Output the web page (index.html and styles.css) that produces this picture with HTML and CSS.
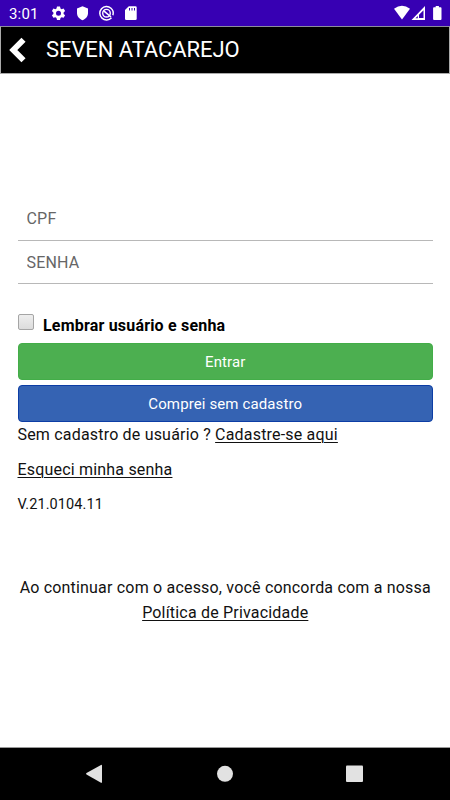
FILE: index.html
```html
<!DOCTYPE html>
<html lang="pt-BR">
<head>
<meta charset="utf-8">
<title>Seven Atacarejo</title>
<link rel="stylesheet" href="styles.css">
</head>
<body>
<div class="status">
  <span class="time">3:01</span>
  <svg class="left-icons" width="92" height="26" viewBox="0 0 92 26">
    <path fill="#fff" fill-rule="evenodd" d="M7 6.500h3l.5 2 1.100.7 2-.6 1.500 2.500-1.500 1.400v1.400l1.500 1.400-1.500 2.500-2-.6-1.100.7-.5 2H7l-.5-2-1.100-.7-2 .6-1.500-2.500 1.500-1.400v-1.400L1.900 11.100l1.500-2.500 2 .6 1.100-.7zM8.500 10.700a2.500 2.500 0 1 0 0 5 2.500 2.500 0 0 0 0-5z"/>
    <path fill="#fff" d="M32.500 6.200l5.500 2.200v4.600c0 3.400-2.300 6-5.500 7.200-3.200-1.200-5.500-3.800-5.500-7.200V8.400z"/>
    <path fill="#fff" d="M78.800 6.300h6.600q1.300 0 1.300 1.300v11.200q0 1.200-1.300 1.200h-9.100q-1.300 0-1.300-1.200v-8.700z"/>
    <g fill="none" stroke="#fff">
      <circle cx="56.500" cy="13.200" r="6.700" stroke-width="1.500" stroke-dasharray="39 3.100" transform="rotate(42 56.500 13.200)"/>
      <circle cx="56.500" cy="13.200" r="3.800" stroke-width="1.400"/>
      <path d="M53.500 10.600l7.500 6.400" stroke-width="1.600"/>
    </g>
    <path d="M79.500 8v2.500M82 8v2.500M84.500 8v2.500" stroke="#3700b3"/>
  </svg>
  <svg class="right-icons" width="50" height="26" viewBox="0 0 50 26">
    <path fill="#fff" d="M2 8.700q8-5.800 16 0l-8 10.800z"/>
    <path fill="#fff" fill-rule="evenodd" d="M33 6v13.900H19.500zM31.500 10.200L27 14.700v3.400h4.500zM25.800 15.900l-2.300 2.300h2.300z"/>
    <path fill="#fff" d="M43.700 6h3.200v1.300h1.700q.9 0 .9.900v10.900q0 .9-.9.900h-6.600q-.9 0-.9-.9V8.200q0-.9.900-.9h1.700z"/>
  </svg>
</div>
<header class="header">
  <svg class="back" width="18" height="26" viewBox="0 0 18 26"><path d="M14.500 2.700L4.300 13l10.200 10.300" fill="none" stroke="#fff" stroke-width="5.800"/></svg>
  <h1 class="title">SEVEN ATACAREJO</h1>
</header>
<main class="content">
  <form class="form">
    <input class="field" type="text" placeholder="CPF">
    <input class="field" type="password" placeholder="SENHA">
    <label class="remember"><input class="check" type="checkbox"><span>Lembrar usuário e senha</span></label>
    <button class="btn enter" type="button"><span>Entrar</span></button>
    <button class="btn guest" type="button"><span>Comprei sem cadastro</span></button>
  </form>
  <p class="line signup">Sem cadastro de usuário ? <a>Cadastre-se aqui</a></p>
  <p class="line forgot"><a>Esqueci minha senha</a></p>
  <p class="line version">V.21.0104.11</p>
  <p class="privacy">Ao continuar com o acesso, você concorda com a nossa<br><a>Política de Privacidade</a></p>
</main>
<nav class="nav">
  <svg width="450" height="52" viewBox="0 0 450 52" fill="#e2e2e2">
    <path d="M86.500 25L101 17q1-.5 1 .6v16.600q0 1-1 .5L86.500 26.500q-1-.7 0-1.500z"/>
    <circle cx="225" cy="25.800" r="8"/>
    <rect x="346" y="17.400" width="17" height="16.600" rx="1"/>
  </svg>
</nav>
</body>
</html>
```
FILE: styles.css
```css
* { box-sizing: border-box; }
body {
  margin: 0;
  height: 800px;
  display: flex;
  flex-direction: column;
  overflow: hidden;
  background: #fff;
  color: #111;
  font-family: Roboto, sans-serif;
  font-size: 16px;
  letter-spacing: .19px;
}
p, h1 { margin: 0; }
a { text-decoration: underline; text-underline-offset: 2px; text-decoration-thickness: 1px; }
.status {
  height: 26px;
  flex: none;
  display: flex;
  background: #3700b3;
  color: #fff;
}
.time { width: 50px; padding-left: 9px; font-size: 15px; line-height: 28px; }
.right-icons { margin-left: auto; margin-right: 8px; }
.header {
  height: 48px;
  flex: none;
  display: flex;
  align-items: center;
  background: #000;
  border: 1px solid #aaa;
  border-top-color: #8c8c9c;
  color: #fff;
}
.back { margin-left: 8px; }
.title { margin-left: 19px; font-size: 22px; font-weight: 400; line-height: 46px; letter-spacing: -.08px; }
.content { flex: 1; padding: 123px 17px 0 17.500px; }
.form { display: flex; flex-direction: column; }
.field {
  height: 43.5px;
  padding: 1px 9px 0;
  border: 0;
  border-bottom: 1px solid #b8b8b8;
  background: none;
  font: 400 16px Roboto, sans-serif;
  letter-spacing: .2px;
}
.field::placeholder { color: #666; opacity: 1; }
.remember { display: flex; height: 59px; padding-top: 30px; font-weight: 700; color: #000; }
.remember span { line-height: 23px; }
.check {
  appearance: none;
  width: 16px;
  height: 16px;
  margin: 0 9px 0 .5px;
  border: 1px solid #a5a5a5;
  border-radius: 2px;
  background: linear-gradient(#eee, #dcdcdc);
}
.btn {
  height: 37px;
  padding: 0;
  border: 1px solid;
  border-radius: 4px;
  color: #fff;
  font: 400 15px Roboto, sans-serif;
  letter-spacing: .12px;
}
.enter { background: #4caf50; border-color: #43ad48; }
.guest { margin-top: 5px; background: #3563b3; border-color: #0c3da5; }
.line { height: 35px; line-height: 26px; white-space: nowrap; }
.version { font-size: 14.500px; letter-spacing: .1px; }
.privacy { margin-top: 49px; text-align: center; line-height: 24.500px; white-space: nowrap; }
.nav { height: 53px; flex: none; background: #000; border-top: 1px solid #999; }
.nav svg { display: block; }
```
